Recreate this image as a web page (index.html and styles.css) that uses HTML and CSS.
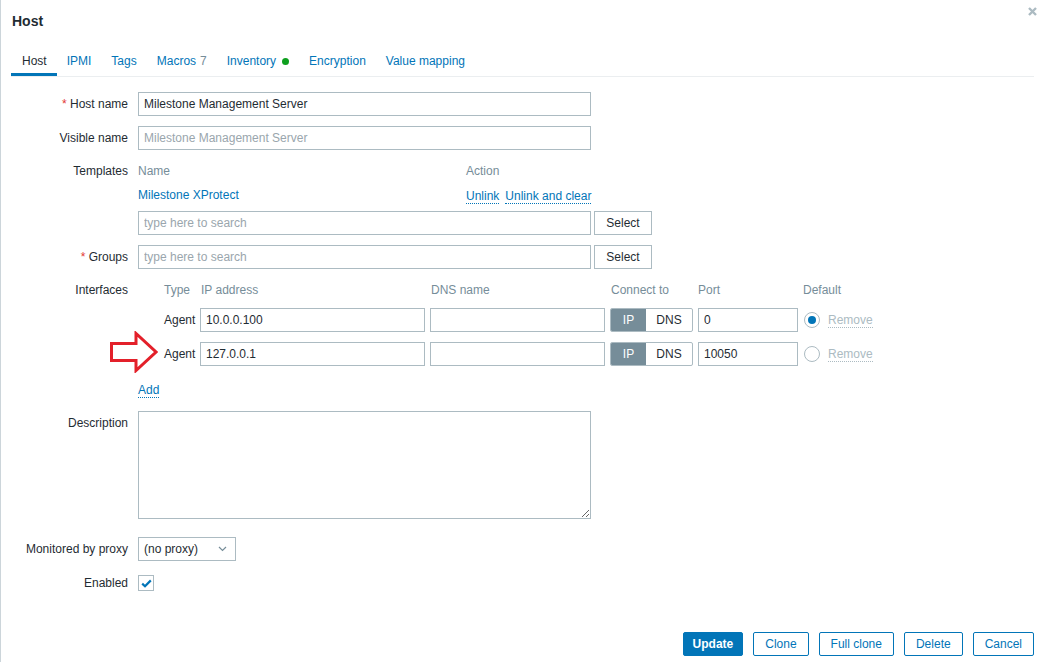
FILE: index.html
```html
<!DOCTYPE html>
<html lang="en">
<head>
  <meta charset="UTF-8" />
  <title>Host</title>
  <link rel="stylesheet" href="styles.css">
</head>
<body>

  <div class="dialog">
    <div class="dialog-head">
      <h4>Host</h4>
      <span class="close" title="Close">
        <svg width="9" height="9" viewBox="0 0 9 9"><path d="M1 1 L8 8 M8 1 L1 8" stroke="#acbbc2" stroke-width="2.4"/></svg>
      </span>
    </div>

    <ul class="tabs">
      <li class="active">Host</li>
      <li>IPMI</li>
      <li>Tags</li>
      <li>Macros <span class="count">7</span></li>
      <li>Inventory <span class="dot"></span></li>
      <li>Encryption</li>
      <li>Value mapping</li>
    </ul>

    <form class="host-form">
      <label class="lbl"><span class="req">*</span> Host name</label>
      <div class="ctl"><input class="txt wide" type="text" value="Milestone Management Server"></div>

      <label class="lbl">Visible name</label>
      <div class="ctl"><input class="txt wide" type="text" placeholder="Milestone Management Server"></div>

      <label class="lbl lbl-sm">Templates</label>
      <div class="ctl">
        <div class="tpl-row tpl-head">
          <span class="tpl-name">Name</span>
          <span>Action</span>
        </div>
        <div class="tpl-row">
          <span class="tpl-name"><a class="plain-link">Milestone XProtect</a></span>
          <span class="actions"><a class="link">Unlink</a><a class="link">Unlink and clear</a></span>
        </div>
        <div class="search">
          <input class="txt wide" type="text" placeholder="type here to search">
          <button type="button" class="btn-alt select">Select</button>
        </div>
      </div>

      <label class="lbl"><span class="req">*</span> Groups</label>
      <div class="ctl">
        <div class="search search-flat">
          <input class="txt wide" type="text" placeholder="type here to search">
          <button type="button" class="btn-alt select">Select</button>
        </div>
      </div>

      <label class="lbl lbl-sm">Interfaces</label>
      <div class="ctl interfaces">
        <div class="iface-row iface-head">
          <span></span>
          <span>Type</span>
          <span class="pad1">IP address</span>
          <span class="pad1">DNS name</span>
          <span class="pad1">Connect to</span>
          <span>Port</span>
          <span class="head-default">Default</span>
          <span></span>
        </div>
        <div class="iface-row first">
          <span></span>
          <span class="type">Agent</span>
          <input class="txt" type="text" value="10.0.0.100">
          <input class="txt" type="text" value="">
          <div class="toggle"><span class="on">IP</span><span>DNS</span></div>
          <input class="txt" type="text" value="0">
          <span class="radio checked"></span>
          <a class="link muted">Remove</a>
        </div>
        <div class="iface-row">
          <span></span>
          <span class="type">Agent</span>
          <input class="txt" type="text" value="127.0.0.1">
          <input class="txt" type="text" value="">
          <div class="toggle"><span class="on">IP</span><span>DNS</span></div>
          <input class="txt" type="text" value="10050">
          <span class="radio"></span>
          <a class="link muted">Remove</a>
        </div>
        <div class="add-row"><a class="link">Add</a></div>

        <svg class="pointer" width="48" height="42" viewBox="0 0 48 42">
          <polygon points="1.5,12.5 26,12.5 26,2.5 46,21 26,39.5 26,29.5 1.5,29.5" fill="none" stroke="#e3202a" stroke-width="3"/>
        </svg>
      </div>

      <label class="lbl">Description</label>
      <div class="ctl"><textarea class="desc"></textarea></div>

      <label class="lbl">Monitored by proxy</label>
      <div class="ctl">
        <div class="proxy">
          <span>(no proxy)</span>
          <svg width="9" height="6" viewBox="0 0 9 6"><path d="M1 1 L4.5 4.5 L8 1" fill="none" stroke="#768d99" stroke-width="1.2"/></svg>
        </div>
      </div>

      <label class="lbl">Enabled</label>
      <div class="ctl">
        <span class="check">
          <svg width="11" height="9" viewBox="0 0 11 9"><path d="M1.2 4.6 L4 7.2 L9.8 1.4" fill="none" stroke="#0275b8" stroke-width="2.2"/></svg>
        </span>
      </div>
    </form>

    <div class="dialog-foot">
      <button type="button" class="btn-main">Update</button>
      <button type="button" class="btn-alt">Clone</button>
      <button type="button" class="btn-alt">Full clone</button>
      <button type="button" class="btn-alt">Delete</button>
      <button type="button" class="btn-alt">Cancel</button>
    </div>
  </div>

</body>
</html>
```

FILE: styles.css
```css
html, body {
  margin: 0;
  height: 100%;
}

body {
  font-family: "Liberation Sans", Arial, sans-serif;
  font-size: 12px;
  color: #1f2c33;
  background: #fff;
}

.dialog {
  position: relative;
  box-sizing: border-box;
  height: 100%;
  display: flex;
  flex-direction: column;
  border-left: 1px solid #ccd5da;
  padding: 0 10px;
}

/* header */
.dialog-head {
  height: 42px;
  display: flex;
  align-items: center;
}

.dialog-head h4 {
  margin: 0 0 0 1px;
  font-size: 14px;
  font-weight: bold;
  color: #1f2c33;
}

.close {
  position: absolute;
  top: 7px;
  right: 7px;
  width: 9px;
  height: 9px;
  line-height: 0;
  cursor: pointer;
}

/* tabs */
.tabs {
  list-style: none;
  margin: 0;
  padding: 0;
  display: flex;
  border-bottom: 1px solid #ebeef0;
}

.tabs li {
  padding: 11px 10px 4px 10px;
  line-height: 16px;
  color: #0275b8;
  border-bottom: 3px solid transparent;
  cursor: pointer;
  display: flex;
  align-items: center;
}

.tabs li.active {
  color: #1f2c33;
  border-bottom-color: #0275b8;
  padding-left: 11px;
}

.tabs .count {
  color: #768d99;
  margin-left: 4px;
}

.tabs .dot {
  display: inline-block;
  width: 7px;
  height: 7px;
  border-radius: 50%;
  background: #0e9f1e;
  margin-left: 6px;
  margin-top: 1px;
}

/* form */
.host-form {
  display: grid;
  grid-template-columns: 117px 1fr;
  column-gap: 10px;
  row-gap: 10px;
  padding-top: 15px;
}

.lbl {
  text-align: right;
  line-height: 24px;
  white-space: nowrap;
}

.lbl-sm {
  line-height: 23px;
}

.req {
  color: #e33734;
}

.ctl {
  min-width: 0;
}

.txt {
  box-sizing: border-box;
  height: 24px;
  border: 1px solid #acbbc2;
  border-radius: 0;
  padding: 0 5px;
  margin: 0;
  font-family: inherit;
  font-size: 12px;
  color: #1f2c33;
  background: #fff;
  outline: none;
  display: block;
}

.txt::placeholder {
  color: #9aa6ad;
}

.wide {
  width: 453px;
}

/* templates */
.tpl-row {
  display: flex;
  align-items: center;
  height: 25px;
  line-height: 25px;
}

.tpl-head {
  height: 23px;
  line-height: 23px;
  color: #768d99;
}

.tpl-name {
  width: 328px;
}

.actions {
  display: flex;
  gap: 6px;
  align-items: center;
  padding-top: 2px;
}

.plain-link {
  color: #0275b8;
  cursor: pointer;
}

.link {
  color: #0275b8;
  border-bottom: 1px dotted #0275b8;
  cursor: pointer;
  line-height: 14px;
}

.link.muted {
  color: #acbbc2;
  border-bottom-color: #acbbc2;
}

.search {
  display: flex;
  gap: 3px;
  margin-top: 3px;
}

.search-flat {
  margin-top: 0;
}

/* buttons */
button {
  font-family: inherit;
  font-size: 12px;
  height: 24px;
  box-sizing: border-box;
  border-radius: 2px;
  padding: 0 11px;
  margin: 0;
  cursor: pointer;
}

.btn-alt {
  background: #fff;
  color: #0275b8;
  border: 1px solid #0275b8;
}

.btn-alt.select {
  color: #1f2c33;
  border-color: #acbbc2;
  border-radius: 0;
  width: 58px;
  padding: 0;
}

.btn-main {
  background: #0275b8;
  color: #fff;
  border: 1px solid #0275b8;
  font-weight: bold;
  padding: 0 9px;
}

/* interfaces */
.interfaces {
  position: relative;
}

.iface-row {
  display: grid;
  grid-template-columns: 21px 31px 225px 175px 83px 100px 18px auto;
  column-gap: 5px;
  align-items: center;
  height: 24px;
  margin-top: 10px;
}

.iface-row.first {
  margin-top: 7px;
}

.iface-head {
  height: 22px;
  margin-top: 0;
  color: #768d99;
}

.iface-head .pad1 {
  padding-left: 1px;
}

.iface-row .txt {
  width: 100%;
}

.type {
  white-space: nowrap;
}

.head-default {
  white-space: nowrap;
}

.toggle {
  display: flex;
  height: 24px;
  box-sizing: border-box;
  border: 1px solid #acbbc2;
  border-radius: 2px;
  overflow: hidden;
}

.toggle span {
  flex: 1;
  text-align: center;
  line-height: 22px;
}

.toggle span.on {
  flex: 0 0 35px;
  background: #768d99;
  color: #fff;
}

.radio {
  box-sizing: border-box;
  width: 16px;
  height: 16px;
  border: 1px solid #acbbc2;
  border-radius: 50%;
  margin-left: 1px;
  position: relative;
}

.radio.checked::after {
  content: "";
  position: absolute;
  top: 3px;
  left: 3px;
  width: 8px;
  height: 8px;
  border-radius: 50%;
  background: #0275b8;
}

.iface-row .link.muted {
  justify-self: start;
  margin-left: 2px;
}

.add-row {
  line-height: 22px;
  margin-top: 13px;
}

.pointer {
  position: absolute;
  left: -28px;
  top: 52px;
}

/* description, proxy, enabled */
.desc {
  display: block;
  box-sizing: border-box;
  width: 453px;
  height: 108px;
  border: 1px solid #acbbc2;
  border-radius: 0;
  margin: 0 0 8px 0;
  padding: 4px 5px;
  font-family: inherit;
  font-size: 12px;
  outline: none;
}

.proxy {
  box-sizing: border-box;
  width: 98px;
  height: 24px;
  border: 1px solid #acbbc2;
  display: flex;
  align-items: center;
  justify-content: space-between;
  padding: 0 8px 0 5px;
}

.check {
  box-sizing: border-box;
  width: 16px;
  height: 16px;
  margin-top: 4px;
  border: 1px solid #acbbc2;
  display: flex;
  align-items: center;
  justify-content: center;
}

/* footer */
.dialog-foot {
  margin-top: auto;
  display: flex;
  justify-content: flex-end;
  gap: 10px;
  padding: 0 0 6px 0;
}
```
